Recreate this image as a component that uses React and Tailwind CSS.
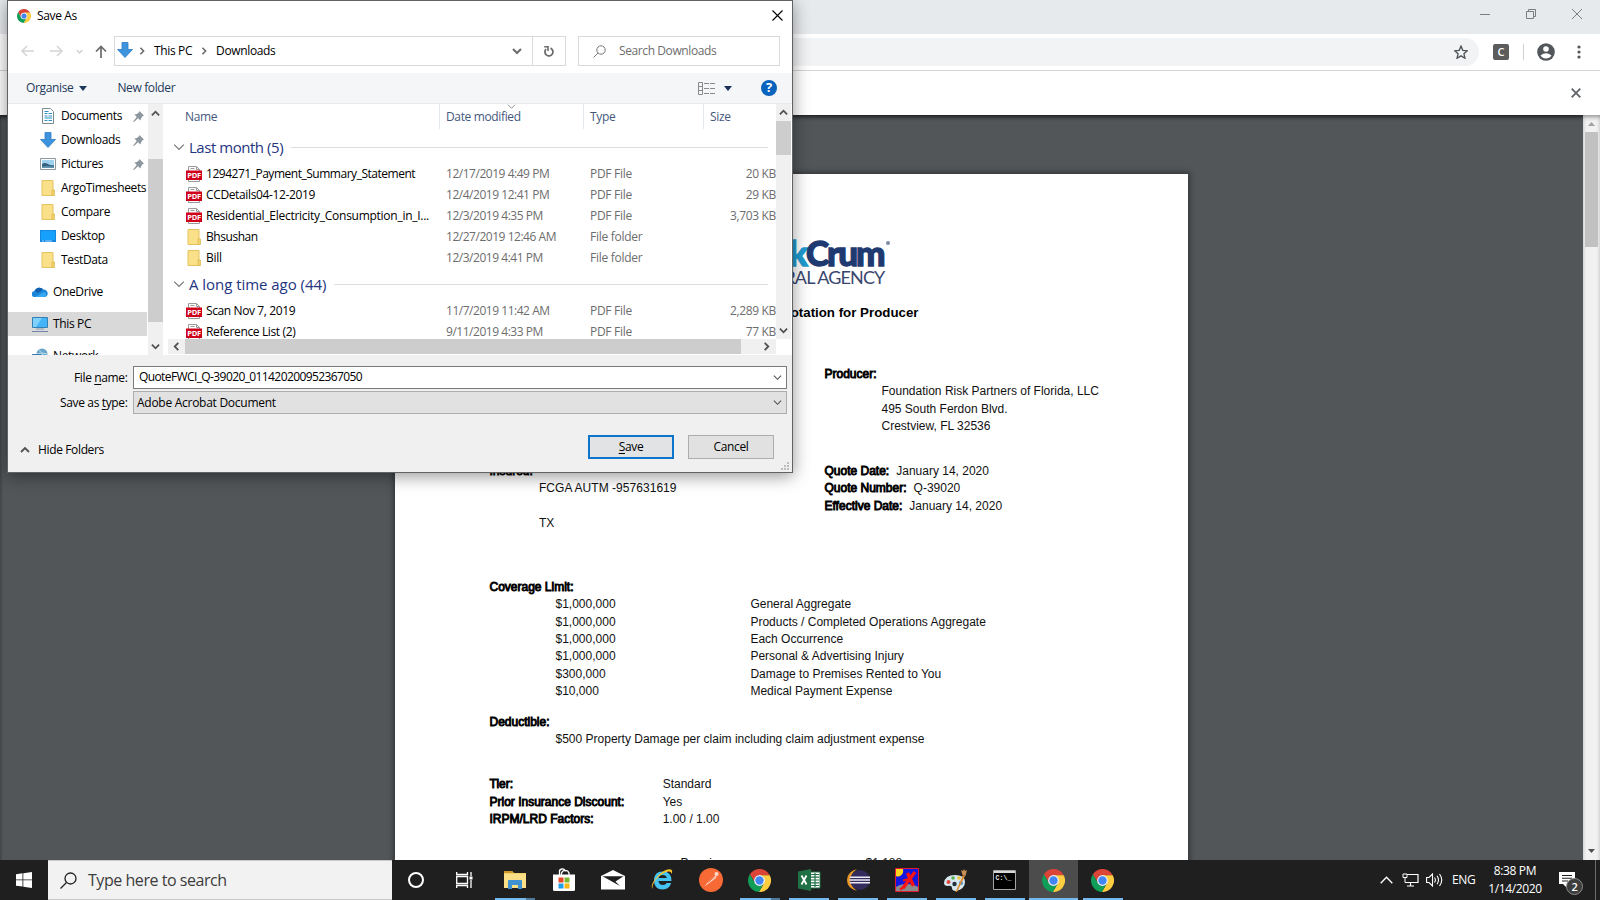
import React from "react";

const UI = "font-['Open_Sans','Noto_Sans',sans-serif]";

function Chrome({ size }) {
  return (
    <svg width={size} height={size} viewBox="2 2 44 44">
      <path fill="#db4437" d="M24 14H43.6A22 22 0 0 0 5.55 12.02L15.34 29A10 10 0 0 1 24 14Z" />
      <path fill="#ffcd40" d="M24 14H43.6A22 22 0 0 1 22.85 45.97L32.66 29Z" />
      <path fill="#0f9d58" d="M5.55 12.02L15.34 29L24 34L32.66 29L22.85 45.97A22 22 0 0 1 5.55 12.02Z" />
      <circle cx="24" cy="24" r="10.4" fill="#f1f1f1" />
      <circle cx="24" cy="24" r="8" fill="#4285f4" />
    </svg>
  );
}

function Chevron({ dir = "down", size = 9, color = "#505050", width = 2 }) {
  const d = {
    down: "M1 3L5 7L9 3",
    up: "M1 7L5 3L9 7",
    left: "M7 1L3 5L7 9",
    right: "M3 1L7 5L3 9",
  }[dir];
  return (
    <svg width={size} height={size} viewBox="0 0 10 10" className="shrink-0">
      <path d={d} fill="none" stroke={color} strokeWidth={width} />
    </svg>
  );
}

const Folder = () => (
  <svg width="16" height="16" viewBox="0 0 16 16">
    <path d="M2 .5h11v15H2z" fill="#fbe08a" stroke="#e2c35d" />
    <path d="M12 10h2.5v5.5H12z" fill="#f3d36f" stroke="#d9b64c" strokeWidth=".7" />
  </svg>
);

const DownArrow = () => (
  <svg width="16" height="16" viewBox="0 0 16 16">
    <path d="M5 .5h6v7h4.5L8 15.5.5 7.500H5z" fill="#3d94dc" stroke="#2b7cc4" strokeWidth=".8" />
  </svg>
);

const DocIcon = () => (
  <svg width="16" height="16" viewBox="0 0 16 16">
    <path d="M2.500.5h8l3 3v12h-11z" fill="#fff" stroke="#7d8a94" />
    <path d="M4.500 3.500h4M4.500 5.500h3M8.500 5.500h3.500M4.500 8h3M8.500 8h3.500M4.500 10h7.500M4.500 12.500h3M8.500 12.500h3.500" stroke="#2f8fc4" strokeWidth="1.200" />
  </svg>
);

const PicIcon = () => (
  <svg width="16" height="16" viewBox="0 0 16 16">
    <path d="M.5 2.500h15v11H.5z" fill="#fff" stroke="#8c979f" />
    <path d="M2 4h12v8H2z" fill="#9fd0ee" />
    <path d="M2 8q3-2 6 0t6 1v3H2z" fill="#35607e" />
    <path d="M2 10.500q5-1 12 0V12H2z" fill="#5f93b1" />
  </svg>
);

const DesktopIcon = () => (
  <svg width="16" height="16" viewBox="0 0 16 16">
    <path d="M0 2h16v12H0z" fill="#1686de" />
    <path d="M1 3h14v9H1z" fill="#15a0fb" />
    <path d="M2 13h2M5 13h7" stroke="#a5d8ff" />
  </svg>
);

const CloudIcon = () => (
  <svg width="16" height="12" viewBox="0 0 16 12">
    <path d="M3 11A3 3 0 0 1 2.500 5 5 5 0 0 1 11 3.500 4 4 0 0 1 13.500 11z" fill="#1a86d9" />
    <path d="M2.500 5A5 5 0 0 1 11 3.500L6 7z" fill="#0e5fb0" />
    <path d="M3 11 12 6A3 3 0 0 1 13.500 11z" fill="#35a8f0" />
  </svg>
);

const PcIcon = () => (
  <svg width="16" height="16" viewBox="0 0 16 16">
    <path d="M.5 1.500h15v10H.5z" fill="#43b4f5" stroke="#3480b4" />
    <path d="M1 2h9L4 11H1z" fill="#7fd0fb" />
    <path d="M4 13h8" stroke="#8b98a8" />
    <path d="M0 15.500h16" stroke="#6f86a8" />
  </svg>
);

const NetIcon = () => (
  <svg width="16" height="16" viewBox="0 0 16 16">
    <circle cx="10" cy="6" r="5.500" fill="#6aa6cb" />
    <path d="M7 2q4 3 5 8M5 6q5-2 10 0" stroke="#b9dcec" fill="none" />
    <path d="M0 6h9v7H0z" fill="#3e7fae" />
  </svg>
);

const Pin = () => (
  <svg width="11" height="11" viewBox="0 0 11 11">
    <path d="M6.500 0 11 4.500 9.700 5 8 7.500 7.500 9.500 5 7.200 1 11 0 10.800 3.700 6 1.500 3.500 3.800 3 6 1.300z" fill="#8d979e" />
  </svg>
);

const Pdf = () => (
  <svg width="16" height="16" viewBox="0 0 16 16" className="shrink-0">
    <path d="M2.500.5h8l3 3v12h-11z" fill="#fff" stroke="#9a9a9a" />
    <path d="M10.500.5v3h3M4.500 2.500h4" fill="none" stroke="#9a9a9a" />
    <path d="M0 4.500h16v9.500H0z" fill="#d0021b" />
    <text x="8" y="12" textAnchor="middle" fontSize="7.500" fontWeight="700" fill="#fff" textLength="13.500" fontFamily="Open Sans">PDF</text>
  </svg>
);

const NAV = [
  [DocIcon, "Documents", true],
  [DownArrow, "Downloads", true],
  [PicIcon, "Pictures", true],
  [Folder, "ArgoTimesheets", false],
  [Folder, "Compare", false],
  [DesktopIcon, "Desktop", false],
  [Folder, "TestData", false],
];

const RECENT = [
  ["pdf", "1294271_Payment_Summary_Statement", "12/17/2019 4:49 PM", "PDF File", "20 KB", "tracking-[-0.48px]"],
  ["pdf", "CCDetails04-12-2019", "12/4/2019 12:41 PM", "PDF File", "29 KB", "tracking-[-0.36px]"],
  ["pdf", "Residential_Electricity_Consumption_in_I...", "12/3/2019 4:35 PM", "PDF File", "3,703 KB", "tracking-[-0.27px]"],
  ["dir", "Bhsushan", "12/27/2019 12:46 AM", "File folder", "", "tracking-[-0.45px]"],
  ["dir", "Bill", "12/3/2019 4:41 PM", "File folder", "", "tracking-[-0.3px]"],
];

const OLD = [
  ["pdf", "Scan Nov 7, 2019", "11/7/2019 11:42 AM", "PDF File", "2,289 KB", "tracking-[-0.39px]"],
  ["pdf", "Reference List (2)", "9/11/2019 4:33 PM", "PDF File", "77 KB", "tracking-[-0.36px]"],
];

function FileRow({ row }) {
  const [kind, name, date, type, size, tracking] = row;
  return (
    <div className="flex h-[21px] shrink-0 items-center text-[#6d6d6d]">
      <div className="ml-[18px] w-[16px]">{kind === "pdf" ? <Pdf /> : <Folder />}</div>
      <div className={`ml-[4px] w-[240px] text-black ${tracking}`}>{name}</div>
      <div className="w-[144px] tracking-[-0.47px]">{date}</div>
      <div className="w-[120px] tracking-[-0.28px]">{type}</div>
      <div className="w-[66px] text-right">{size}</div>
    </div>
  );
}

function Group({ label, tracking }) {
  return (
    <div className={`flex h-[32px] shrink-0 items-center pl-[5px] text-[15px] text-[#23357f] ${tracking}`}>
      <Chevron size={12} color="#777" width={1} />
      <span className="ml-[4px]">{label}</span>
      <span className="mr-[8px] ml-[8px] h-px flex-1 bg-[#dedede]" />
    </div>
  );
}

function SaveDialog() {
  return (
    <div className={`absolute top-0 left-[7px] flex h-[473px] w-[786px] flex-col border border-[#626262] bg-white text-[12px] tracking-[-0.36px] text-black shadow-[0_3px_16px_rgba(0,0,0,0.42)] ${UI}`}>
      <div className="flex h-[29px] shrink-0 items-center pr-[9.500px] pl-[9px]">
        <Chrome size={14} />
        <span className="ml-[6px]">Save As</span>
        <svg width="11" height="11" viewBox="0 0 11 11" className="ml-auto">
          <path d="M.5.5l10 10M10.500.5l-10 10" stroke="#000" strokeWidth="1.100" />
        </svg>
      </div>

      <div className="flex h-[43px] shrink-0 items-center pb-[1px] pl-[13px]">
        <svg width="13" height="12" viewBox="0 0 13 12"><path d="M6 1L1 6l5 5M1 6h12" fill="none" stroke="#d4d4d4" strokeWidth="1.500" /></svg>
        <svg width="13" height="12" viewBox="0 0 13 12" className="ml-[16px]"><path d="M7 1l5 5-5 5M12 6H0" fill="none" stroke="#d4d4d4" strokeWidth="1.500" /></svg>
        <span className="ml-[13px] flex"><Chevron size={7} color="#cfcfcf" /></span>
        <svg width="12" height="13" viewBox="0 0 12 13" className="ml-[12px]"><path d="M1 6.500L6 1.500l5 5M6 1.500V13" fill="none" stroke="#6b6b6b" strokeWidth="1.700" /></svg>
        <div className="ml-[7px] flex h-[30px] w-[452px] items-center border border-[#d9d9d9] pl-[2px]">
          <span className="-mt-[2px]"><DownArrow /></span>
          <span className="ml-[5px] flex"><Chevron dir="right" size={8} color="#6b6b6b" /></span>
          <span className="ml-[8px]">This PC</span>
          <span className="ml-[8px] flex"><Chevron dir="right" size={8} color="#6b6b6b" /></span>
          <span className="ml-[8px]">Downloads</span>
          <span className="mr-[10px] ml-auto flex"><Chevron size={10} color="#6b6b6b" /></span>
          <span className="flex h-full w-[33px] items-center justify-center border-l border-[#d9d9d9]">
            <svg width="12" height="13" viewBox="0 0 12 13">
              <path d="M7.500 3.200A4 4 0 1 1 3 4.200" fill="none" stroke="#6b6b6b" strokeWidth="1.800" />
              <path d="M1.200 1.800H5V6" fill="none" stroke="#6b6b6b" strokeWidth="1.600" />
            </svg>
          </span>
        </div>
        <div className="ml-[12px] flex h-[30px] w-[202px] items-center border border-[#d9d9d9] pl-[14px] text-[#6d6d6d]">
          <svg width="13" height="13" viewBox="0 0 13 13"><circle cx="8" cy="5" r="4.200" fill="none" stroke="#777" /><path d="M5 8L.5 12.500" stroke="#777" /></svg>
          <span className="ml-[13px] tracking-[-0.4px]">Search Downloads</span>
        </div>
      </div>

      <div className="flex h-[31px] shrink-0 items-center border-b border-[#e9eaeb] bg-[#f5f6f7] pr-[15px] pl-[18px] text-[#1e395b]">
        <span>Organise</span>
        <svg width="8" height="5" className="ml-[6px]"><path d="M0 0h8L4 5z" fill="#1e395b" /></svg>
        <span className="ml-[30px]">New folder</span>
        <svg width="17" height="13" viewBox="0 0 17 13" className="ml-auto">
          <path d="M.5.5h4v12h-4zM.5 4.500h4M.5 8.500h4" fill="none" stroke="#8a8a8a" />
          <path d="M6 1.500h5M12 1.500h5M6 6.500h5M12 6.500h5M6 11.500h5M12 11.500h5" stroke="#8a8a8a" />
        </svg>
        <svg width="8" height="5" className="ml-[9px]"><path d="M0 0h8L4 5z" fill="#1b2f57" /></svg>
        <span className="ml-[29px] flex size-[16px] items-center justify-center rounded-full bg-[#0a63bd] text-[13px] font-bold text-white">?</span>
      </div>

      <div className="flex h-[251px] shrink-0 overflow-hidden">
        <div className="w-[140px] overflow-hidden">
          {NAV.map(([Icon, label, pinned]) => (
            <div key={label} className="flex h-[24px] items-center pl-[32px]">
              <Icon />
              <span className="ml-[5px] whitespace-nowrap">{label}</span>
              {pinned && <span className="mr-[4px] ml-auto"><Pin /></span>}
            </div>
          ))}
          <div className="mt-[8px] flex h-[24px] items-center pl-[24px]"><CloudIcon /><span className="ml-[5px]">OneDrive</span></div>
          <div className="mt-[8px] flex h-[24px] w-[139px] items-center bg-[#d9d9d9] pl-[24px]"><PcIcon /><span className="ml-[5px]">This PC</span></div>
          <div className="mt-[8px] flex h-[24px] items-center pl-[24px]"><NetIcon /><span className="ml-[5px]">Network</span></div>
        </div>
        <div className="flex w-[15px] flex-col items-center bg-[#f0f0f0]">
          <span className="flex h-[18px] items-center"><Chevron dir="up" /></span>
          <span className="mt-[37px] h-[163px] w-full bg-[#cdcdcd]" />
          <span className="mt-auto flex h-[18px] items-center"><Chevron /></span>
        </div>
        <div className="ml-[5px] flex flex-1 flex-col">
          <div className="flex h-[235px] overflow-hidden">
            <div className="flex w-[608px] flex-col overflow-hidden">
              <div className="flex h-[25px] shrink-0 text-[#44587c]">
                <div className="w-[272px] border-r border-[#e3e8ee] pt-[4px] pl-[17px]">Name</div>
                <div className="relative w-[144px] border-r border-[#e3e8ee] pt-[4px] pl-[6px]">
                  Date modified
                  <span className="absolute top-[-2px] left-[67px] flex"><Chevron size={9} color="#888" width={1} /></span>
                </div>
                <div className="w-[120px] border-r border-[#e3e8ee] pt-[4px] pl-[6px]">Type</div>
                <div className="pt-[4px] pl-[6px]">Size</div>
              </div>
              <div className="h-[2px] shrink-0" />
              <Group label="Last month (5)" tracking="tracking-[-0.46px]" />
              {RECENT.map((r) => <FileRow key={r[1]} row={r} />)}
              <Group label="A long time ago (44)" tracking="tracking-[-0.04px]" />
              {OLD.map((r) => <FileRow key={r[1]} row={r} />)}
            </div>
            <div className="flex w-[15px] flex-col items-center bg-[#f0f0f0]">
              <span className="flex h-[17px] items-center"><Chevron dir="up" /></span>
              <span className="h-[34px] w-full bg-[#cdcdcd]" />
              <span className="mt-auto flex h-[18px] items-center"><Chevron /></span>
            </div>
          </div>
          <div className="flex h-[15px] w-[608px] items-center bg-[#f0f0f0]">
            <span className="flex w-[17px] justify-center"><Chevron dir="left" /></span>
            <span className="h-full w-[556px] bg-[#cdcdcd]" />
            <span className="mr-[3px] ml-auto flex w-[13px] justify-center"><Chevron dir="right" /></span>
          </div>
        </div>
      </div>

      <div className="flex flex-1 flex-col bg-[#f0f0f0] pt-[11px]">
        <div className="flex h-[23px] items-center">
          <span className="w-[119.500px] text-right">File <u className="underline-offset-2">n</u>ame:</span>
          <div className="ml-[5.500px] flex h-[23px] w-[654px] items-center border border-[#7a7a7a] bg-white pr-[4px] pl-[5px]">
            <span className="-mt-[2px] tracking-[-0.6px]">QuoteFWCI_Q-39020_011420200952367050</span>
            <span className="ml-auto flex"><Chevron size={9} width={1.2} /></span>
          </div>
        </div>
        <div className="mt-[2px] flex h-[23px] items-center">
          <span className="w-[119.500px] text-right">Save as <u className="underline-offset-2">t</u>ype:</span>
          <div className="ml-[5.500px] flex h-[23px] w-[654px] items-center border border-[#adadad] bg-[#e1e1e1] pr-[4px] pl-[3px]">
            <span className="tracking-[-0.27px]">Adobe Acrobat Document</span>
            <span className="ml-auto flex"><Chevron size={9} width={1.2} /></span>
          </div>
        </div>
        <div className="mt-[21px] flex h-[24px] items-center">
          <span className="mt-[5px] ml-[12px] flex"><Chevron dir="up" size={10} width={1.8} /></span>
          <span className="mt-[5px] ml-[8px]">Hide Folders</span>
          <span className="mr-[14px] ml-auto flex h-[24px] w-[86px] items-center justify-center border-2 border-[#0f74cb] bg-[#e1e3e5]"><u className="underline-offset-2">S</u>ave</span>
          <span className="mr-[18px] flex h-[24px] w-[86px] items-center justify-center border border-[#adadad] bg-[#e1e1e1]">Cancel</span>
        </div>
        <svg width="9" height="9" className="mt-[3px] mr-[3px] ml-auto">
          <path d="M7 0h2v2H7zM4 3h2v2H4zM7 3h2v2H7zM1 6h2v2H1zM4 6h2v2H4zM7 6h2v2H7z" fill="#bdbdbd" />
        </svg>
      </div>
    </div>
  );
}

function Label({ children }) {
  return <span className="[-webkit-text-stroke:0.9px_#000]">{children}</span>;
}

const LIMITS = [
  ["$1,000,000", "General Aggregate"],
  ["$1,000,000", "Products / Completed Operations Aggregate"],
  ["$1,000,000", "Each Occurrence"],
  ["$1,000,000", "Personal & Advertising Injury"],
  ["$300,000", "Damage to Premises Rented to You"],
  ["$10,000", "Medical Payment Expense"],
];

const FACTORS = [
  ["Tier:", "Standard"],
  ["Prior Insurance Discount:", "Yes"],
  ["IRPM/LRD Factors:", "1.00 / 1.00"],
];

function DocumentPage() {
  return (
    <div className="mt-[59px] ml-[395px] h-[700px] w-[793px] shrink-0 bg-white pl-[94.500px] font-['Liberation_Sans',Arial,sans-serif] text-[12px] leading-[17.380px] text-[#111] shadow-[0_0_5px_2px_rgba(0,0,0,0.35)]">
      <div className="flex h-[192px] w-[430px] flex-col pt-[58px]">
        <div className="flex h-[37px] w-[400px] justify-end font-['Lato',sans-serif] text-[35px] leading-[40px] font-black tracking-[-2px] text-[#1f3a70]">
          <span className="text-[#1f9bd0] [-webkit-text-stroke:1.3px_#1f9bd0]">Frank</span>
          <span className="[-webkit-text-stroke:1.3px_#1f3a70]">Crum</span>
          <span className="mt-[9px] ml-[2px] size-[4px] rounded-full bg-[#7d89a8]" />
        </div>
        <div className="w-[395px] text-right font-['Lato',sans-serif] text-[18px] leading-[16px] tracking-[-0.850px] text-[#39476e]">GENERAL AGENCY</div>
        <div className="mt-[19px] w-[429px] text-right text-[13.300px] font-bold text-black">Quotation for Producer</div>
      </div>
      <div className="h-[96.750px] pl-[335px]">
        <Label>Producer:</Label>
        <div className="pl-[57px]">
          <div>Foundation Risk Partners of Florida, LLC</div>
          <div>495 South Ferdon Blvd.</div>
          <div>Crestview, FL 32536</div>
        </div>
      </div>
      <div className="flex h-[116px]">
        <div className="w-[335px]">
          <Label>Insured:</Label>
          <div className="pl-[49.500px]">
            <div className="tracking-[0.04px]">FCGA AUTM -957631619</div>
            <div className="mt-[17.380px]">TX</div>
          </div>
        </div>
        <div>
          <div><Label>Quote Date:</Label><span className="ml-[7px]">January 14, 2020</span></div>
          <div><Label>Quote Number:</Label><span className="ml-[7px]">Q-39020</span></div>
          <div><Label>Effective Date:</Label><span className="ml-[7px]">January 14, 2020</span></div>
        </div>
      </div>
      <div className="h-[135px]">
        <Label>Coverage Limit:</Label>
        {LIMITS.map(([amount, text]) => (
          <div key={text} className="flex pl-[66px]">
            <span className="w-[194.900px]">{amount}</span>
            <span>{text}</span>
          </div>
        ))}
      </div>
      <div className="h-[62.500px]">
        <Label>Deductible:</Label>
        <div className="pl-[66px]">$500 Property Damage per claim including claim adjustment expense</div>
      </div>
      {FACTORS.map(([name, value]) => (
        <div key={name} className="flex">
          <span className="w-[173.200px]"><Label>{name}</Label></span>
          <span>{value}</span>
        </div>
      ))}
      <div className="mt-[27px] flex pl-[191px]">
        <span className="w-[185px]">Premium</span>
        <span>$1,188</span>
      </div>
    </div>
  );
}

const Explorer = () => (
  <svg width="22" height="20" viewBox="0 0 22 20">
    <path d="M0 1h8l2 2h12v15H0z" fill="#f3cf68" />
    <path d="M0 1h8l2 2H0z" fill="#c89a2b" />
    <path d="M0 4h22v14H0z" fill="#fadf87" />
    <path d="M4 19v-8q0-1 1-1h12q1 0 1 1v8h-4v-4H8v4z" fill="#3f92d2" />
  </svg>
);

const Store = () => (
  <svg width="24" height="24" viewBox="0 0 24 24">
    <path d="M7.500 7V4.500a3 3 0 0 1 6-1M9.500 7V5a4 4 0 0 1 7.500 0v2" fill="none" stroke="#fff" strokeWidth="1.300" />
    <path d="M1 6.500h22v15q0 1.500-1.500 1.500h-19Q1 23 1 21.500z" fill="#fff" />
    <path d="M6.500 9.500h5v5h-5z" fill="#e8472b" /><path d="M12.500 9.500h5v5h-5z" fill="#7cb82f" />
    <path d="M6.500 15.500h5v5h-5z" fill="#1f9fe8" /><path d="M12.500 15.500h5v5h-5z" fill="#f9b716" />
  </svg>
);

const Mail = () => (
  <svg width="24" height="20" viewBox="0 0 24 20">
    <path d="M0 6L12 0l12 6v13.500H0z" fill="#fff" />
    <path d="M1.500 6.300h21L14.500 11.500l4.500 4.500z" fill="#1f1f1f" />
  </svg>
);

const Ie = () => (
  <svg width="24" height="24" viewBox="0 0 24 24">
    <path d="M21.500 13H8.500q.4 4 4.500 4 2.500 0 3.700-2h4.500q-2 6.500-8.500 6.500-8.700 0-8.700-9T12.700 3.500q9 0 8.800 9.500zM8.600 10h8.200q-.5-3-4-3-3.600 0-4.200 3z" fill="#45c3f3" />
    <path d="M3 21Q-1 18 7 9T21 1.500q2 1 .5 4.500 0-3-3-2.500Q12 4.500 6.500 11T3 21z" fill="#f6c32c" />
  </svg>
);

const Postman = () => (
  <svg width="24" height="24" viewBox="0 0 24 24">
    <circle cx="12" cy="12" r="12" fill="#f76935" />
    <path d="M5.500 18.500l4-5 6-5.500 2-.5-.5 2.500-6 4.500z" fill="#fbd9cb" />
    <path d="M9 14.500l7-6" stroke="#e2572a" strokeWidth=".8" /><circle cx="17.500" cy="6" r="2" fill="#fbd9cb" />
  </svg>
);

const Excel = () => (
  <svg width="24" height="22" viewBox="0 0 24 22">
    <path d="M12 3h11v16H12z" fill="#fff" stroke="#1f7145" />
    <path d="M14 5.500h8M14 8.200h8M14 11h8M14 13.800h8M14 16.500h8M18 4v14" stroke="#1f7145" strokeWidth="1.200" />
    <path d="M1 2.500L14 0v22L1 19.500z" fill="#1f7145" />
    <path d="M4.500 6.500l5 9M9.500 6.500l-5 9" stroke="#fff" strokeWidth="1.800" />
  </svg>
);

const Eclipse = () => (
  <svg width="24" height="24" viewBox="0 0 24 24">
    <path d="M11 1Q1 4 1 12t10 11Q4.500 18 4.500 12T11 1z" fill="#e9982a" />
    <circle cx="14" cy="12" r="10" fill="#332c5c" />
    <path d="M4 9.300h20M3.500 12h21M4 14.700h20" stroke="#eceaf6" strokeWidth="1.500" />
  </svg>
);

const XLaunch = () => (
  <svg width="24" height="24" viewBox="0 0 24 24">
    <path d="M.5.500h23v23H.5z" fill="#1515e0" />
    <path d="M1 19q4-3 11-3t11 3v4H1z" fill="#8b8b8b" />
    <path d="M1 1h7q1 5-3 7-2 1-4 0z" fill="#ffd51e" />
    <path d="M20 4L8 20M12.500 5l6 13" stroke="#fb1212" strokeWidth="3.400" fill="none" />
    <path d="M8 12.500l6-1.500M9 19l-4 2.500" stroke="#fb1212" strokeWidth="2.200" />
    <path d="M.5.500h23v23H.5z" fill="none" stroke="#e01a32" />
  </svg>
);

const Paint = () => (
  <svg width="25" height="25" viewBox="0 0 25 25">
    <path d="M12 7Q22 7 22 14t-9 9q-4 0-4-3t-4-2q-4 0-4-3Q2 7 12 7z" fill="#d8e8f1" />
    <circle cx="5.500" cy="14" r="2" fill="#e0483e" /><circle cx="10" cy="10" r="1.800" fill="#5cb14c" />
    <circle cx="16" cy="10" r="1.800" fill="#f0c33a" /><circle cx="11.500" cy="16" r="2.200" fill="#24313a" /><circle cx="18" cy="15" r="2" fill="#3d8fd1" />
    <path d="M12.500 24L20 7l2 1-8 16z" fill="#df8d35" /><path d="M19.500 7L18 2l2 1 1-2 1 2 2-1-1.500 6z" fill="#c88f55" />
  </svg>
);

const Cmd = () => (
  <svg width="23" height="20" viewBox="0 0 23 20">
    <path d="M.5.500h22v19H.5z" fill="#000" stroke="#a5a5a5" />
    <path d="M1 1h21v2H1z" fill="#d9d9d9" />
    <text x="2.500" y="9.500" fontSize="6.500" fontWeight="700" fill="#e8e8e8" fontFamily="Liberation Mono" textLength="16">C:\_</text>
  </svg>
);

const APPS = [
  [Explorer, "split"], [Store, ""], [Mail, ""], [Ie, ""], [Postman, ""], [Chrome, "split"], [Excel, "run"],
  [Eclipse, "run"], [XLaunch, "run"], [Paint, "run"], [Cmd, "run"], [Chrome, "active"], [Chrome, "run"],
];

function Taskbar() {
  return (
    <div className={`flex h-[40px] shrink-0 items-center bg-[#1f1f1f] text-white ${UI}`}>
      <div className="flex w-[48px] justify-center">
        <svg width="16" height="16" viewBox="0 0 16 16">
          <path d="M0 2.200L6.500 1.300V7.500H0zM7.300 1.200L16 0v7.500H7.300zM0 8.300h6.500v6.300L0 13.700zM7.300 8.300H16V16l-8.700-1.300z" fill="#fff" />
        </svg>
      </div>
      <div className="flex h-full w-[344px] items-center border-y border-[#c9c9c9] bg-[#f2f2f2] pl-[12px] text-[16px] tracking-[-0.450px] text-[#3c3c3c]">
        <svg width="17" height="17" viewBox="0 0 17 17"><circle cx="10.500" cy="6.500" r="5.500" fill="none" stroke="#222" strokeWidth="1.300" /><path d="M6.500 10.500L.5 16.500" stroke="#222" strokeWidth="1.300" /></svg>
        <span className="ml-[11px]">Type here to search</span>
      </div>
      <div className="flex w-[48px] justify-center"><span className="size-[16px] rounded-full border-[2.500px] border-white" /></div>
      <div className="flex w-[50px] pl-[16px]">
        <svg width="17" height="16" viewBox="0 0 17 16">
          <path d="M.7 0v2.500h10.800V0M.7 16v-2.500h10.800V16M.7 4.500h10.800v7H.7zM15 0v4M15 8v8" fill="none" stroke="#fff" strokeWidth="1.300" />
          <path d="M13.500 4.500h3v3h-3z" fill="#fff" />
        </svg>
      </div>
      {APPS.map(([Icon, state], i) => (
        <div key={i} className={state === "active" ? "flex h-full w-[49px] flex-col items-center bg-[#4c4c4c]" : "flex h-full w-[49px] flex-col items-center"}>
          <div className="flex h-[38px] items-center pt-[2px]"><Icon size={23} /></div>
          {state === "run" && <span className="h-[2px] w-[40px] bg-[#76b9ed]" />}
          {state === "active" && <span className="h-[2px] w-full bg-[#76b9ed]" />}
          {state === "split" && <span className="flex h-[2px] w-[40px] bg-[#4f7a9c]"><span className="w-[31px] bg-[#76b9ed]" /></span>}
        </div>
      ))}
      <div className="ml-auto flex h-full items-center text-[12px] leading-[18px] tracking-[-0.360px]">
        <svg width="13" height="8" viewBox="0 0 13 8"><path d="M.7 7.300L6.500 1.300l5.800 6" fill="none" stroke="#fff" strokeWidth="1.300" /></svg>
        <svg width="17" height="14" viewBox="0 0 17 14" className="ml-[9px]">
          <path d="M5 1.500h11v8H4M8.500 9.500v3M5 13h7" fill="none" stroke="#fff" strokeWidth="1.200" />
          <path d="M1 1h4v3.500H1zM3 4.500v5h2" fill="#1f1f1f" stroke="#fff" />
        </svg>
        <svg width="17" height="14" viewBox="0 0 17 14" className="ml-[7px]">
          <path d="M.6 4.500h2.400L6.500 1v12L3 9.500H.6zM8.500 4.500q1.800 2.500 0 5M11 2.800q3 4.200 0 8.400M13.500 1q4.500 6 0 12" fill="none" stroke="#fff" strokeWidth="1.100" />
        </svg>
        <span className="ml-[9px] w-[24px]">ENG</span>
        <span className="ml-[11px] w-[56px] text-center">8:38 PM<br />1/14/2020</span>
        <span className="relative ml-[16px] flex w-[36px]">
          <svg width="16" height="16" viewBox="0 0 16 16"><path d="M0 0h16v12H8v4l-4-4H0z" fill="#fff" /><path d="M3 3.500h10M3 6.300h10M3 9h6" stroke="#1f1f1f" strokeWidth="1.100" /></svg>
          <span className="absolute top-[6px] left-[7px] flex size-[17px] items-center justify-center rounded-full border border-[#8a8a8a] bg-[#3d3d3d] text-[11px] font-semibold">2</span>
        </span>
        <span className="mr-[4px] h-full w-px bg-[#6b6b6b]" />
      </div>
    </div>
  );
}

export default function App() {
  return (
    <div className="relative flex h-[900px] w-[1600px] flex-col overflow-hidden bg-white">
      <div className="flex h-[34px] shrink-0 items-center justify-end bg-[#e7eaed] pr-[18px] pb-[6px]">
        <svg width="10" height="10"><path d="M0 5.500h10" stroke="#7b7d80" /></svg>
        <svg width="10" height="10" className="ml-[36px]"><path d="M.5 2.500h7v7h-7zM2.500 2.500v-2h7v7h-2" fill="none" stroke="#7b7d80" /></svg>
        <svg width="10" height="10" className="ml-[36px]"><path d="M0 0l10 10M10 0L0 10" stroke="#7b7d80" /></svg>
      </div>
      <div className="flex h-[37px] shrink-0 items-center border-b border-[#d3d4d6] pr-[19px] pl-[96px]">
        <div className="flex h-[28px] flex-1 items-center justify-end rounded-full bg-[#f1f3f4] pr-[11px]">
          <svg width="14" height="14" viewBox="0.800 0.500 12.400 12.400"><path d="M7 1.500l1.600 3.700 4 .4-3 2.700.9 3.900L7 10.100l-3.500 2.100.9-3.900-3-2.700 4-.4z" fill="none" stroke="#505357" strokeWidth="1.200" /></svg>
        </div>
        <span className="ml-[14px] flex size-[16px] items-center justify-center rounded-[2px] bg-[#5c5c5c] font-['Open_Sans',sans-serif] text-[11px] font-semibold text-white">C</span>
        <span className="ml-[14px] h-[16px] w-px bg-[#cfd0d2]" />
        <svg width="18" height="18" viewBox="0 0 18 18" className="ml-[13px]">
          <circle cx="9" cy="9" r="8.800" fill="#53565a" /><circle cx="9" cy="6" r="2.800" fill="#fff" /><path d="M3.500 12.500q5.500-4.500 11 0Q12.500 15.500 9 15.500T3.500 12.500z" fill="#fff" />
        </svg>
        <svg width="4" height="14" className="ml-[22px]"><circle cx="2" cy="2" r="1.600" fill="#53565a" /><circle cx="2" cy="7" r="1.600" fill="#53565a" /><circle cx="2" cy="12" r="1.600" fill="#53565a" /></svg>
      </div>
      <div className="flex h-[44px] shrink-0 items-center justify-end bg-white pr-[19px]">
        <svg width="10" height="10"><path d="M.7.700l8.600 8.600M9.300.700L.7 9.300" stroke="#64676a" strokeWidth="1.900" /></svg>
      </div>
      <div className="flex h-[745px] shrink-0 overflow-hidden bg-[#525659] shadow-[inset_0_3px_4px_-1px_rgba(0,0,0,0.7)]">
        <div className="flex w-[1583px]"><DocumentPage /></div>
        <div className="flex w-[17px] flex-col items-center bg-[#f1f1f1] shadow-[inset_0_3px_4px_-1px_rgba(0,0,0,0.4)]">
          <svg width="7" height="4" className="mt-[7px]"><path d="M0 4L3.500 0 7 4z" fill="#a3a3a3" /></svg>
          <span className="mt-[6px] h-[115px] w-[13px] bg-[#c1c1c1]" />
          <svg width="7" height="4" className="mt-auto mb-[7px]"><path d="M0 0h7L3.500 4z" fill="#505050" /></svg>
        </div>
      </div>
      <Taskbar />
      <SaveDialog />
    </div>
  );
}
